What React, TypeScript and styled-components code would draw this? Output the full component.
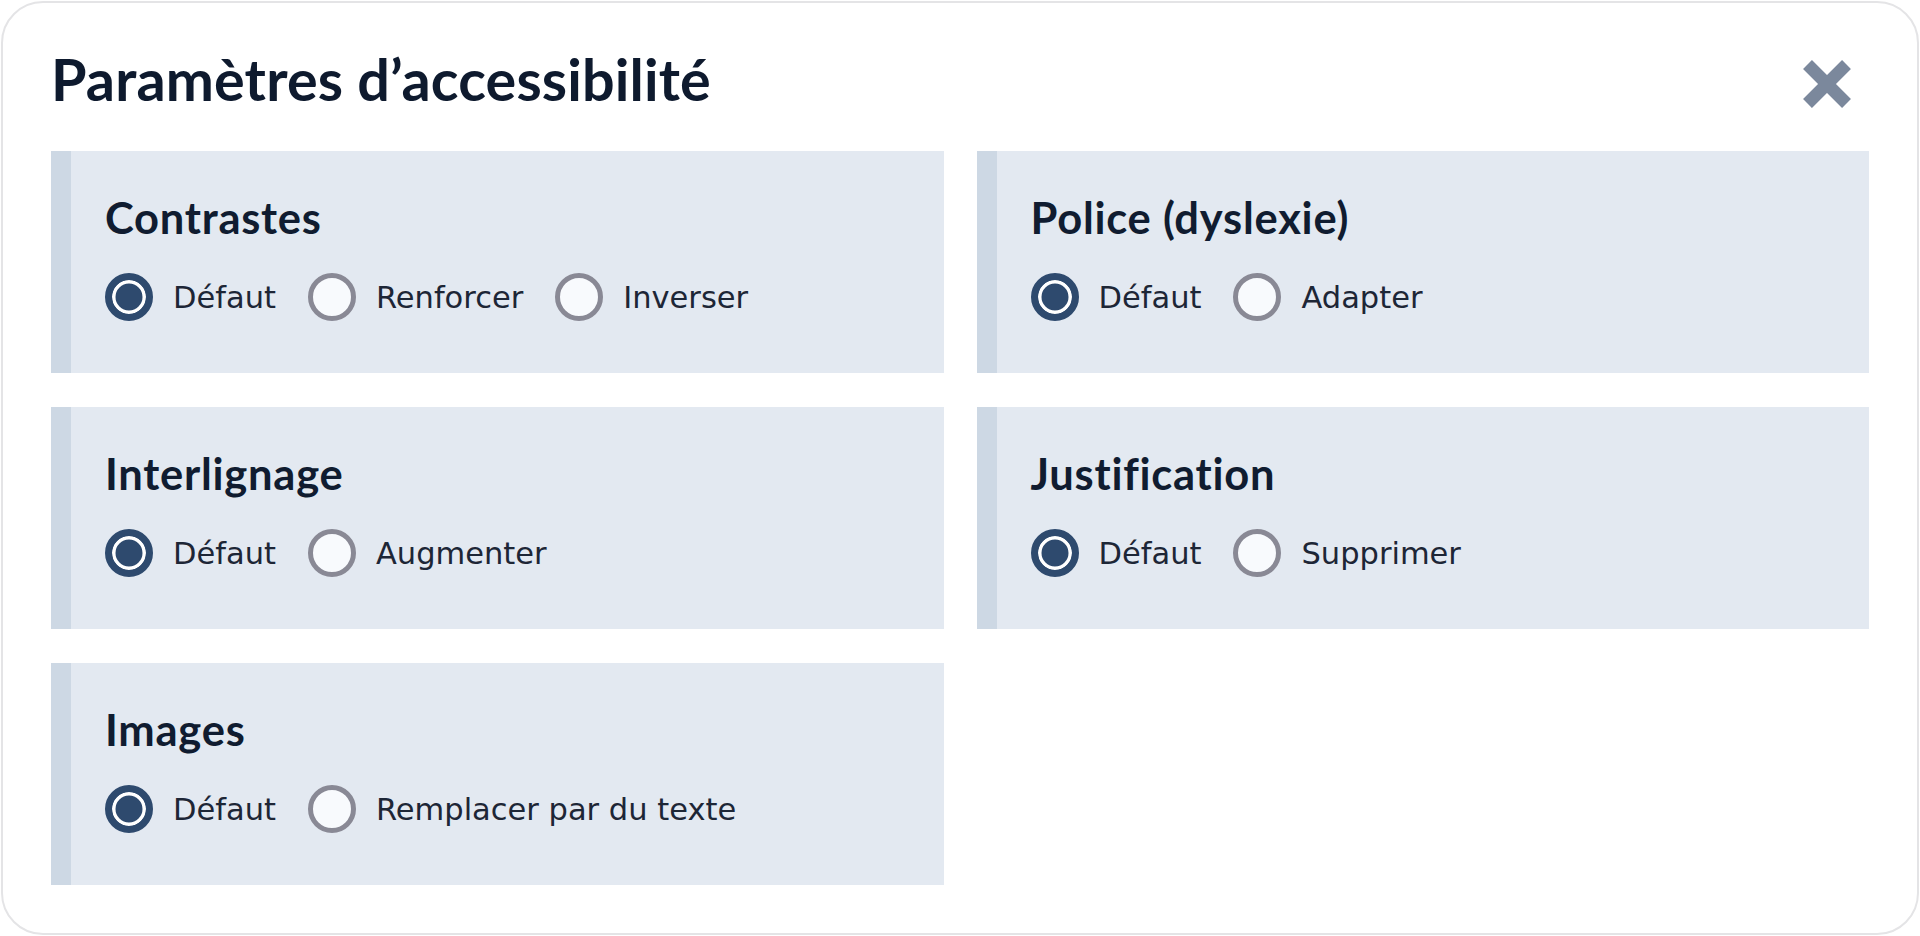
import React from "react";
import styled, { createGlobalStyle } from "styled-components";

const Global = createGlobalStyle`
  html, body { margin: 0; padding: 0; background: #ffffff; }
  body { padding: 1px; box-sizing: border-box; height: 936px; }
  *, *::before, *::after { box-sizing: border-box; }
`;

const Modal = styled.div`
  height: 934px;
  border: 2px solid #e4e4e6;
  border-radius: 42px;
  background: #ffffff;
  padding: 42px 48px 0 48px;
  display: flex;
  flex-direction: column;
  gap: 38px;
`;

const Header = styled.div`
  display: flex;
  align-items: center;
  justify-content: space-between;
  padding-right: 18px;
`;

const Title = styled.h1`
  margin: 0;
  font-family: "Lato", "Liberation Sans", sans-serif;
  font-weight: 700;
  font-size: 57.5px;
  line-height: 68px;
  color: #0e1a2e;
  letter-spacing: 0.15px;
`;

const CloseButton = styled.button`
  width: 48px;
  height: 48px;
  padding: 0;
  border: 0;
  background: transparent;
  cursor: pointer;
  display: flex;
  margin-top: 10px;
`;

const Grid = styled.div`
  display: grid;
  grid-template-columns: 1fr 1fr;
  column-gap: 33px;
  row-gap: 34px;
`;

const Panel = styled.fieldset`
  margin: 0;
  min-width: 0;
  height: 222px;
  border: 0;
  border-left: 20px solid #cdd8e4;
  background: #e3e9f1;
  padding: 40px 34px 0 34px;
  display: flex;
  flex-direction: column;
  gap: 30px;
`;

const PanelTitle = styled.legend`
  float: left;
  width: 100%;
  padding: 0;
  margin: 0;
  font-family: "Lato", "Liberation Sans", sans-serif;
  font-weight: 700;
  font-size: 43.5px;
  line-height: 52px;
  color: #101c30;
  letter-spacing: 0.75px;
`;

const Options = styled.div`
  display: flex;
  align-items: center;
  gap: 32px;
`;

const Option = styled.label`
  display: flex;
  align-items: center;
  gap: 20px;
  font-family: "DejaVu Sans", "Verdana", sans-serif;
  font-size: 30.5px;
  color: #1d2636;
  cursor: pointer;
`;

const Radio = styled.input`
  appearance: none;
  -webkit-appearance: none;
  margin: 0;
  width: 48px;
  height: 48px;
  border-radius: 50%;
  border: 5px solid #898995;
  background: #f8fafd;
  flex: none;
  cursor: pointer;

  &:checked {
    border: 7px solid #2e4a6e;
    background: #2e4a6e;
    box-shadow: inset 0 0 0 3.5px #ffffff;
  }
`;

type Group = { title: string; name: string; options: string[] };

const groups: Group[] = [
  { title: "Contrastes", name: "contrast", options: ["Défaut", "Renforcer", "Inverser"] },
  { title: "Police (dyslexie)", name: "font", options: ["Défaut", "Adapter"] },
  { title: "Interlignage", name: "line", options: ["Défaut", "Augmenter"] },
  { title: "Justification", name: "justify", options: ["Défaut", "Supprimer"] },
  { title: "Images", name: "images", options: ["Défaut", "Remplacer par du texte"] },
];

const CloseIcon = () => (
  <svg width="48" height="48" viewBox="0 0 48 48" aria-hidden="true">
    <g stroke="#7b889c" strokeWidth="12.5" strokeLinecap="butt">
      <line x1="4.5" y1="4.5" x2="43.5" y2="43.5" />
      <line x1="43.5" y1="4.5" x2="4.5" y2="43.5" />
    </g>
  </svg>
);

export default function App() {
  return (
    <>
      <Global />
      <Modal role="dialog" aria-label="Paramètres d’accessibilité">
        <Header>
          <Title>Paramètres d’accessibilité</Title>
          <CloseButton aria-label="Fermer">
            <CloseIcon />
          </CloseButton>
        </Header>
        <Grid>
          {groups.map((g) => (
            <Panel key={g.name}>
              <PanelTitle>{g.title}</PanelTitle>
              <Options>
                {g.options.map((o, i) => (
                  <Option key={o}>
                    <Radio type="radio" name={g.name} defaultChecked={i === 0} />
                    {o}
                  </Option>
                ))}
              </Options>
            </Panel>
          ))}
        </Grid>
      </Modal>
    </>
  );
}
